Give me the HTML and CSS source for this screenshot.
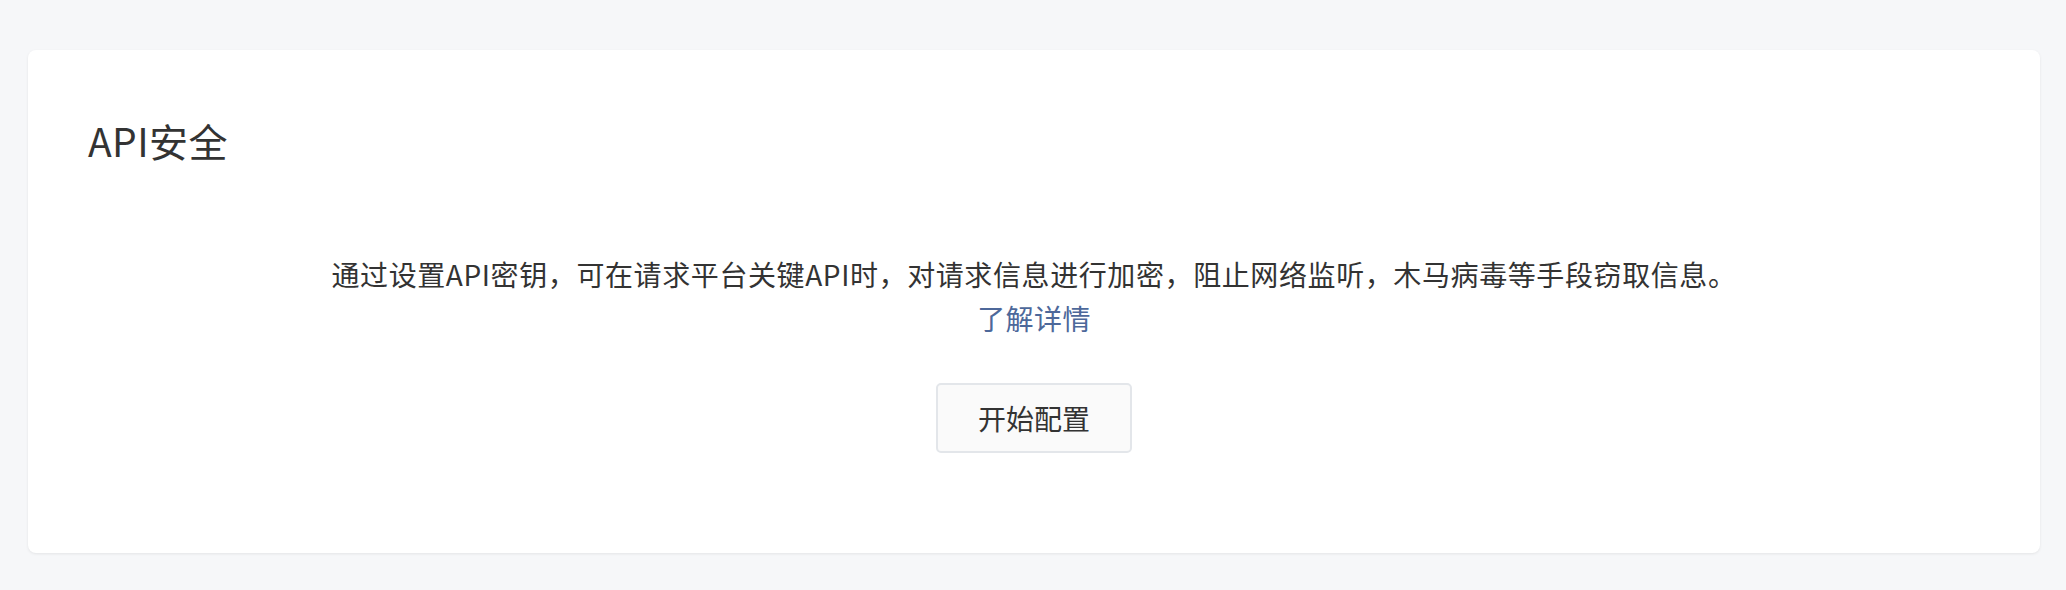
FILE: index.html
```html
<!DOCTYPE html>
<html lang="zh-CN">
<head>
<meta charset="utf-8">
<title>API安全</title>
<link rel="stylesheet" href="styles.css">
</head>
<body>
<div class="page">
  <section class="card">
    <h1 class="title">API安全</h1>
    <div class="content">
      <p class="desc">通过设置API密钥，可在请求平台关键API时，对请求信息进行加密，阻止网络监听，木马病毒等手段窃取信息。</p>
      <a class="link" href="#">了解详情</a>
      <div class="actions">
        <button class="btn" type="button">开始配置</button>
      </div>
    </div>
  </section>
</div>
</body>
</html>
```

FILE: styles.css
```css
html, body {
  margin: 0;
  padding: 0;
}
body {
  background: #f6f7f9;
  font-family: "Noto Sans CJK SC", "Noto Sans", sans-serif;
  color: #333333;
}
.page {
  padding: 50px 26px 37px 28px;
}
.card {
  background: #ffffff;
  border-radius: 8px;
  box-shadow: 0 1px 3px rgba(0, 0, 0, 0.08);
  padding: 64px 60px 100px 60px;
  height: 503px;
  box-sizing: border-box;
}
.title {
  margin: 0;
  font-size: 39px;
  line-height: 52px;
  font-weight: 400;
  letter-spacing: 0.4px;
  color: #333333;
}
.content {
  display: flex;
  flex-direction: column;
  align-items: center;
  margin-top: 86px;
}
.desc {
  margin: 0;
  font-size: 28px;
  line-height: 44px;
  letter-spacing: 0.6px;
  color: #333333;
}
.link {
  font-size: 28px;
  line-height: 44px;
  letter-spacing: 0.4px;
  color: #4d689a;
  text-decoration: none;
}
.actions {
  margin-top: 43px;
}
.btn {
  box-sizing: border-box;
  height: 70px;
  padding: 0 40px;
  font-family: inherit;
  font-size: 28px;
  line-height: 66px;
  color: #333333;
  background: #fafafa;
  border: 2px solid #e3e6ea;
  border-radius: 5px;
}
```
